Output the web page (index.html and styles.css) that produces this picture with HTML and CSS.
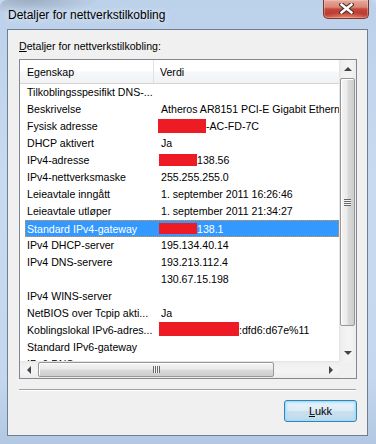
FILE: index.html
```html
<!DOCTYPE html>
<html lang="no">
<head>
<meta charset="utf-8">
<title>Detaljer for nettverkstilkobling</title>
<link rel="stylesheet" href="styles.css">
</head>
<body>
<div class="window">
  <div class="titlebar">
    <span class="title">Detaljer for nettverkstilkobling</span>
    <div class="close">
      <svg width="15" height="11" viewBox="0 0 15 11">
        <path d="M2.5 1.5 L12.5 9.5 M12.5 1.5 L2.5 9.5" stroke="#4a3230" stroke-width="4.6" stroke-linecap="square" fill="none"/>
        <path d="M2.5 1.5 L12.5 9.5 M12.5 1.5 L2.5 9.5" stroke="#ffffff" stroke-width="2.4" stroke-linecap="square" fill="none"/>
      </svg>
    </div>
  </div>
  <div class="client">
    <div class="group-label"><u>D</u>etaljer for nettverkstilkobling:</div>
    <div class="listbox">
      <div class="lv-main">
        <div class="header">
          <div class="hcell h1">Egenskap</div>
          <div class="hcell h2">Verdi</div>
        </div>
        <div class="rows">
          <div class="row"><div class="k">Tilkoblingsspesifikt DNS-...</div><div class="v"></div></div>
          <div class="row"><div class="k">Beskrivelse</div><div class="v">Atheros AR8151 PCI-E Gigabit Ethernet</div></div>
          <div class="row"><div class="k">Fysisk adresse</div><div class="v"><span class="red r-mac"></span>-AC-FD-7C</div></div>
          <div class="row"><div class="k">DHCP aktivert</div><div class="v">Ja</div></div>
          <div class="row"><div class="k">IPv4-adresse</div><div class="v"><span class="red r-ip"></span>138.56</div></div>
          <div class="row"><div class="k">IPv4-nettverksmaske</div><div class="v">255.255.255.0</div></div>
          <div class="row"><div class="k">Leieavtale inngått</div><div class="v">1. september 2011 16:26:46</div></div>
          <div class="row"><div class="k">Leieavtale utløper</div><div class="v">1. september 2011 21:34:27</div></div>
          <div class="row sel"><div class="k">Standard IPv4-gateway</div><div class="v"><span class="red r-gw"></span>138.1</div></div>
          <div class="row"><div class="k">IPv4 DHCP-server</div><div class="v">195.134.40.14</div></div>
          <div class="row"><div class="k">IPv4 DNS-servere</div><div class="v">193.213.112.4</div></div>
          <div class="row"><div class="k"></div><div class="v">130.67.15.198</div></div>
          <div class="row"><div class="k">IPv4 WINS-server</div><div class="v"></div></div>
          <div class="row"><div class="k">NetBIOS over Tcpip akti...</div><div class="v">Ja</div></div>
          <div class="row"><div class="k">Koblingslokal IPv6-adres...</div><div class="v"><span class="red r-ll"></span>:dfd6:d67e%11</div></div>
          <div class="row"><div class="k">Standard IPv6-gateway</div><div class="v"></div></div>
          <div class="row"><div class="k">IPv6 DNS-servere</div><div class="v"></div></div>
        </div>
      </div>
      <div class="vscroll">
        <div class="sbtn"><span class="arr-up"></span></div>
        <div class="vtrack"><div class="vthumb"><span class="vgrip"></span></div></div>
        <div class="sbtn"><span class="arr-down"></span></div>
      </div>
      <div class="hscroll">
        <div class="sbtn"><span class="arr-left"></span></div>
        <div class="htrack"><div class="hthumb"><span class="hgrip"></span></div></div>
        <div class="sbtn"><span class="arr-right"></span></div>
      </div>
      <div class="corner"></div>
    </div>
    <div class="sep"></div>
    <div class="buttons">
      <button class="btn" type="button"><u>L</u>ukk</button>
    </div>
  </div>
</div>
</body>
</html>
```
FILE: styles.css
```css
* { box-sizing: border-box; }
html, body { margin: 0; padding: 0; }
body {
  width: 376px;
  height: 444px;
  overflow: hidden;
  font-family: "Liberation Sans", Arial, sans-serif;
  font-size: 10.6px;
  color: #000;
  background: #c6d9ee;
}
.window {
  width: 376px;
  height: 444px;
  display: flex;
  flex-direction: column;
  padding: 0 8px 8px 7px;
  border-radius: 7px 7px 0 0;
  background:
    radial-gradient(ellipse 70px 14px at 30px 0, rgba(120,130,145,.45), rgba(120,130,145,0)),
    linear-gradient(#bcd1ea, #c8daef 40%, #c4d7ee 85%, #b2c8e2);
  overflow: hidden;
}
.titlebar {
  height: 29px;
  flex: none;
  display: flex;
  justify-content: space-between;
  align-items: flex-start;
}
.title {
  font-size: 12px;
  line-height: 14px;
  padding: 8px 0 0 1px;
  text-shadow: 0 0 6px rgba(255,255,255,.9);
}
.close {
  width: 46px;
  height: 19px;
  margin-right: -1px;
  border: 1px solid #7a3630;
  border-top: none;
  border-radius: 0 0 5px 5px;
  background:
    radial-gradient(ellipse 26px 6px at 50% 100%, rgba(240,140,110,.9), rgba(240,140,110,0)),
    linear-gradient(#e6aa9c, #d98776 40%, #c6473c 50%, #b83a31 80%, #c85043);
  box-shadow: inset 0 0 0 1px rgba(255,220,210,.35);
  display: flex;
  align-items: center;
  justify-content: center;
  padding-bottom: 1px;
}
.client {
  flex: 1;
  background: #f0f0f0;
  border: 1px solid #6e7f93;
  padding: 10px 10px 0 11px;
  display: flex;
  flex-direction: column;
}
.group-label {
  line-height: 13px;
  height: 13px;
  white-space: nowrap;
}
.listbox {
  margin-top: 6px;
  width: 338px;
  height: 320px;
  border: 1px solid #828790;
  background: #fff;
  display: grid;
  grid-template-columns: 319px 17px;
  grid-template-rows: 301px 17px;
}
.lv-main { overflow: hidden; }
.header {
  height: 24px;
  display: flex;
  background: linear-gradient(#ffffff, #ffffff 45%, #f6f7f9 55%, #f1f2f4);
  border-bottom: 1px solid #d5d5d5;
}
.hcell { line-height: 24px; white-space: nowrap; }
.h1 { width: 134px; padding-left: 7px; border-right: 1px solid #dfe3e8; }
.h2 { padding-left: 6px; }
.rows { display: flex; flex-direction: column; }
.row {
  height: 17px;
  line-height: 17px;
  margin-left: 5px;
  display: flex;
  white-space: nowrap;
}
.k { width: 129px; flex: none; padding-left: 2px; overflow: hidden; }
.v { padding-left: 7px; flex: 1; overflow: hidden; }
.row.sel {
  background: #3399ff;
  color: #fff;
  border: 1px dotted #e8902a;
}
.row.sel .k { padding-left: 1px; }
.red { display: inline-block; vertical-align: top; background: #ed1c24; }
.r-mac { width: 48px; height: 14px; margin: 1px 0 0 -3px; }
.r-ip  { width: 38px; height: 12px; margin: 2px 0 0 -2px; }
.r-gw  { width: 38px; height: 11px; margin: 2px 0 0 -3px; }
.r-ll  { width: 80px; height: 14px; margin: 0 0 0 -2px; }

/* scrollbars */
.vscroll {
  display: flex;
  flex-direction: column;
  background: linear-gradient(to right, #e2e2e2, #efefef 2px, #f4f4f4 60%, #ececec);
}
.hscroll {
  display: flex;
  background: linear-gradient(#e2e2e2, #efefef 2px, #f4f4f4 60%, #ececec);
}
.sbtn {
  width: 17px;
  height: 17px;
  flex: none;
  display: flex;
  align-items: center;
  justify-content: center;
}
.arr-up, .arr-down, .arr-left, .arr-right { width: 0; height: 0; }
.arr-up { border-left: 4px solid transparent; border-right: 4px solid transparent; border-bottom: 4px solid #444; }
.arr-down { border-left: 4px solid transparent; border-right: 4px solid transparent; border-top: 4px solid #444; }
.arr-left { border-top: 4px solid transparent; border-bottom: 4px solid transparent; border-right: 4px solid #444; }
.arr-right { border-top: 4px solid transparent; border-bottom: 4px solid transparent; border-left: 4px solid #444; }
.vtrack { flex: 1; display: flex; flex-direction: column; padding: 1px 1px 0 1px; }
.vthumb {
  height: 248px;
  border: 1px solid #979797;
  border-radius: 2px;
  background: linear-gradient(to right, #f4f4f4, #ebebeb 45%, #dadada 55%, #cdcdcd);
  box-shadow: inset 1px 1px 0 #fff;
  display: flex;
  align-items: center;
  justify-content: center;
}
.vgrip {
  width: 7px;
  height: 7px;
  background: repeating-linear-gradient(#666 0 1px, #f6f6f6 1px 2px);
}
.htrack { flex: 1; display: flex; padding: 1px 0 1px 1px; }
.hthumb {
  width: 236px;
  border: 1px solid #979797;
  border-radius: 2px;
  background: linear-gradient(#f4f4f4, #ebebeb 45%, #dadada 55%, #cdcdcd);
  box-shadow: inset 1px 1px 0 #fff;
  display: flex;
  align-items: center;
  justify-content: center;
}
.hgrip {
  width: 7px;
  height: 7px;
  background: repeating-linear-gradient(to right, #666 0 1px, #f6f6f6 1px 2px);
}
.corner { background: #f0f0f0; }

.sep {
  margin-top: 10px;
  width: 337px;
  border-top: 1px solid #a0a0a0;
  border-bottom: 1px solid #ffffff;
}
.buttons {
  margin-top: 9px;
  width: 338px;
  display: flex;
  justify-content: flex-end;
}
.btn {
  width: 73px;
  height: 22px;
  padding: 0;
  font-family: "Liberation Sans", Arial, sans-serif;
  font-size: 11px;
  color: #000;
  border: 1px solid #3c7fb1;
  border-radius: 3px;
  background: linear-gradient(#eaf4fb, #dcebf6 48%, #cbe0ee 52%, #c2dbec);
  box-shadow: inset 0 0 0 1px #9ee1ff, inset 0 0 2px 2px rgba(150,220,255,.6);
}
```
